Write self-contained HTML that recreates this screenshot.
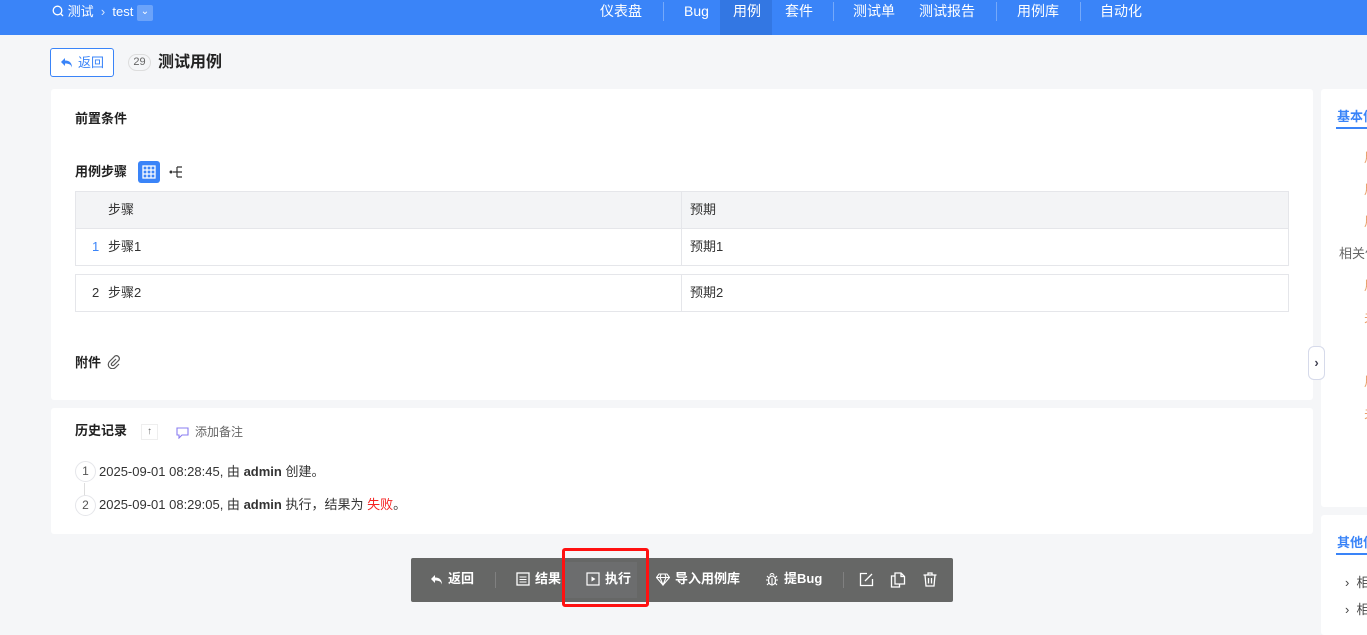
<!DOCTYPE html>
<html><head><meta charset="utf-8"><style>
*{box-sizing:border-box;margin:0;padding:0}
body{width:1367px;height:626px;overflow:hidden;background:#f5f6f8;font-family:"Liberation Sans","Noto Sans CJK SC",sans-serif;font-size:13px;line-height:16px;color:#333;position:relative}
.abs{position:absolute;white-space:nowrap}
.top{left:0;top:0;width:1367px;height:35px;background:#3a84f8;color:#fff}
.nav{top:2px;height:20px;line-height:18px;font-size:14px;color:#fff}
.sep{top:2px;width:1px;height:19px;background:rgba(255,255,255,.3)}
.card{background:#fff;border-radius:3px}
.b{font-weight:bold;color:#222}
.cell{border:1px solid #e5e6ea;position:absolute}
.tb{color:#fff;font-size:13px;top:571px;font-weight:bold;display:flex;align-items:center;gap:5px}
.tb svg{display:block}
</style></head><body>
<div class="abs top"></div>
<div class="abs nav" style="left:52px;font-size:13px;top:3px">
<svg width="12" height="12" style="vertical-align:-1px"><circle cx="5.5" cy="5.5" r="4.3" fill="none" stroke="#fff" stroke-width="1.3"/><path d="M8.5 8.5l2.5 2.5" stroke="#fff" stroke-width="1.3"/></svg> 测试 <span style="opacity:.8">&nbsp;›&nbsp;</span> test <span style="display:inline-block;width:16px;height:16px;background:rgba(255,255,255,.25);border-radius:2px;vertical-align:middle;text-align:center;line-height:14px;font-size:10px">⌄</span></div>
<div class="abs" style="left:720px;top:0;width:52px;height:35px;background:#3377e3"></div>
<div class="abs nav" style="left:600px">仪表盘</div>
<div class="abs sep" style="left:663px"></div>
<div class="abs nav" style="left:684px">Bug</div>
<div class="abs nav" style="left:733px">用例</div>
<div class="abs nav" style="left:785px">套件</div>
<div class="abs sep" style="left:833px"></div>
<div class="abs nav" style="left:853px">测试单</div>
<div class="abs nav" style="left:919px">测试报告</div>
<div class="abs sep" style="left:996px"></div>
<div class="abs nav" style="left:1017px">用例库</div>
<div class="abs sep" style="left:1080px"></div>
<div class="abs nav" style="left:1100px">自动化</div>

<div class="abs" style="left:50px;top:48px;width:64px;height:29px;border:1px solid #3a84f8;border-radius:3px;color:#3a84f8;background:#fff;display:flex;align-items:center;justify-content:center;gap:5px"><svg width="13" height="11"><path d="M5 1L1 5l4 4V6.5c4 0 6 1 7 4 0-4-2-7-7-7V1z" fill="#3a84f8"/></svg>返回</div>
<div class="abs" style="left:128px;top:54px;width:23px;height:17px;border:1px solid #ddd;border-radius:9px;font-size:11px;text-align:center;line-height:15px;color:#666">29</div>
<div class="abs b" style="left:158px;top:54px;font-size:16px;line-height:18px">测试用例</div>

<div class="abs card" style="left:51px;top:89px;width:1262px;height:311px"></div>
<div class="abs b" style="left:75px;top:111px">前置条件</div>
<div class="abs b" style="left:75px;top:164px">用例步骤</div>
<div class="abs" style="left:138px;top:161px;width:22px;height:22px;background:#3a84f8;border-radius:3px"><svg width="22" height="22"><rect x="5" y="5" width="12" height="12" fill="none" stroke="#fff" stroke-width="1.3"/><path d="M5 9h12M5 13h12M9 5v12M13 5v12" stroke="#fff" stroke-width="1.2"/></svg></div>
<svg class="abs" style="left:168px;top:164px" width="18" height="16"><circle cx="3" cy="8" r="1.5" fill="#333"/><path d="M5 8h4M9 3v10M9 3h5M9 8h5M9 13h5" stroke="#333" stroke-width="1.2" fill="none"/></svg>
<div class="cell" style="left:75px;top:191px;width:1214px;height:38px;background:#f3f4f6"></div>
<div class="abs" style="left:681px;top:191px;width:1px;height:38px;background:#e5e6ea"></div>
<div class="abs" style="left:108px;top:202px">步骤</div>
<div class="abs" style="left:690px;top:202px">预期</div>
<div class="cell" style="left:75px;top:228px;width:1214px;height:38px"></div>
<div class="abs" style="left:681px;top:228px;width:1px;height:38px;background:#e5e6ea"></div>
<div class="abs" style="left:92px;top:239px;color:#3a84f8">1</div><div class="abs" style="left:108px;top:239px">步骤1</div><div class="abs" style="left:690px;top:239px">预期1</div>
<div class="cell" style="left:75px;top:274px;width:1214px;height:38px"></div>
<div class="abs" style="left:681px;top:274px;width:1px;height:38px;background:#e5e6ea"></div>
<div class="abs" style="left:92px;top:285px">2</div><div class="abs" style="left:108px;top:285px">步骤2</div><div class="abs" style="left:690px;top:285px">预期2</div>
<div class="abs b" style="left:75px;top:355px">附件</div>
<svg class="abs" style="left:107px;top:355px" width="14" height="14"><path d="M9 4L4.5 8.5a1.5 1.5 0 0 0 2 2L12 5a3 3 0 0 0-4-4L2.5 6.5a4 4 0 0 0 6 6L12 9" fill="none" stroke="#555" stroke-width="1.2"/></svg>

<div class="abs card" style="left:51px;top:408px;width:1262px;height:126px"></div>
<div class="abs b" style="left:75px;top:423px">历史记录</div>
<div class="abs" style="left:141px;top:424px;width:17px;height:16px;border:1px solid #eee;font-size:10px;text-align:center;line-height:14px;color:#666">↑</div>
<svg class="abs" style="left:176px;top:427px" width="13" height="12"><path d="M1 1h11v7H6l-3 3V8H1z" fill="none" stroke="#8a7cf0" stroke-width="1.1"/></svg>
<div class="abs" style="left:195px;top:424px;color:#666;font-size:12px">添加备注</div>
<div class="abs" style="left:84px;top:483px;width:1px;height:14px;background:#ddd"></div>
<div class="abs" style="left:75px;top:461px;width:21px;height:21px;border:1px solid #e5e6ea;border-radius:50%;text-align:center;line-height:19px;font-size:12px;color:#555;background:#fff">1</div>
<div class="abs" style="left:75px;top:495px;width:21px;height:21px;border:1px solid #e5e6ea;border-radius:50%;text-align:center;line-height:19px;font-size:12px;color:#555;background:#fff">2</div>
<div class="abs" style="left:99px;top:464px">2025-09-01 08:28:45, 由 <b>admin</b> 创建。</div>
<div class="abs" style="left:99px;top:497px">2025-09-01 08:29:05, 由 <b>admin</b> 执行，结果为 <span style="color:#f52222">失败</span>。</div>

<div class="abs card" style="left:1321px;top:89px;width:60px;height:418px"></div>
<div class="abs" style="left:1337px;top:109px;color:#3a84f8;font-weight:bold">基本信息</div>
<div class="abs" style="left:1336px;top:127px;width:40px;height:2px;background:#3a84f8"></div>
<div class="abs" style="left:1339px;top:246px;color:#666">相关信息</div>
<div class="abs" style="left:1364px;top:150px;color:#e8a06a">用</div>
<div class="abs" style="left:1364px;top:182px;color:#e8a06a">用</div>
<div class="abs" style="left:1364px;top:214px;color:#e8a06a">用</div>
<div class="abs" style="left:1364px;top:278px;color:#e8a06a">用</div>
<div class="abs" style="left:1364px;top:310px;color:#e8a06a">关</div>
<div class="abs" style="left:1364px;top:374px;color:#e8a06a">用</div>
<div class="abs" style="left:1364px;top:406px;color:#e8a06a">关</div>
<div class="abs" style="left:1308px;top:346px;width:17px;height:34px;border:1px solid #d6daea;border-radius:6px;background:#fff;text-align:center;line-height:32px;font-weight:bold;color:#445">›</div>
<div class="abs card" style="left:1321px;top:515px;width:60px;height:120px"></div>
<div class="abs" style="left:1337px;top:535px;color:#3a84f8;font-weight:bold">其他信息</div>
<div class="abs" style="left:1336px;top:553px;width:40px;height:2px;background:#3a84f8"></div>
<div class="abs" style="left:1345px;top:575px;color:#444">›&nbsp; 相</div>
<div class="abs" style="left:1345px;top:602px;color:#444">›&nbsp; 相</div>

<div class="abs" style="left:411px;top:558px;width:542px;height:44px;background:#666766;border-radius:2px"></div>
<div class="abs" style="left:562px;top:562px;width:75px;height:36px;background:#6c6d6e"></div>
<div class="abs tb" style="left:430px"><svg width="13" height="11"><path d="M5 1L1 5l4 4V6.5c4 0 6 1 7 4 0-4-2-7-7-7V1z" fill="#fff"/></svg>返回</div>
<div class="abs" style="left:495px;top:572px;width:1px;height:16px;background:#808080"></div>
<div class="abs tb" style="left:516px"><svg width="14" height="14"><rect x="1" y="1" width="12" height="12" fill="none" stroke="#fff" stroke-width="1.3"/><path d="M3.5 5h7M3.5 7.5h7M3.5 10h7" stroke="#fff"/></svg>结果</div>
<div class="abs tb" style="left:586px"><svg width="14" height="14"><rect x="1" y="1" width="12" height="12" fill="none" stroke="#fff" stroke-width="1.2"/><path d="M5.5 4.5v5l4-2.5z" fill="#fff"/></svg>执行</div>
<div class="abs tb" style="left:656px"><svg width="14" height="13"><path d="M3 1h8l2.5 3.5L7 12 .5 4.5z M.5 4.5h13M5 1L4 4.5 7 12 10 4.5 9 1" fill="none" stroke="#fff" stroke-width="1.1"/></svg>导入用例库</div>
<div class="abs tb" style="left:765px"><svg width="14" height="14"><ellipse cx="7" cy="8.5" rx="3.5" ry="4.5" fill="none" stroke="#fff" stroke-width="1.2"/><path d="M5 3.5a2 2 0 0 1 4 0M1 8h2.5M10.5 8H13M2 4l2 2M12 4l-2 2M2 13l2-2M12 13l-2-2M7 6v7" stroke="#fff" stroke-width="1.1" fill="none"/></svg>提Bug</div>
<div class="abs" style="left:843px;top:572px;width:1px;height:16px;background:#808080"></div>
<svg class="abs" style="left:859px;top:572px" width="15" height="15"><path d="M8 1.5H1.5v12h12V7M6 9l7-7" fill="none" stroke="#fff" stroke-width="1.3"/></svg>
<svg class="abs" style="left:890px;top:572px" width="16" height="16"><path d="M5 4H1.5v11h8v-3M5 1h6l3.5 3.5V12H5z M11 1v3.5h3.5" fill="none" stroke="#fff" stroke-width="1.3"/></svg>
<svg class="abs" style="left:922px;top:571px" width="16" height="16"><path d="M1.5 4h13M6 4V2h4v2M3 4l1 11h8l1-11M6.5 7v5.5M9.5 7v5.5" fill="none" stroke="#fff" stroke-width="1.3"/></svg>
<div class="abs" style="left:562px;top:548px;width:87px;height:59px;border:3px solid #f11;border-radius:3px"></div>
</body></html>
